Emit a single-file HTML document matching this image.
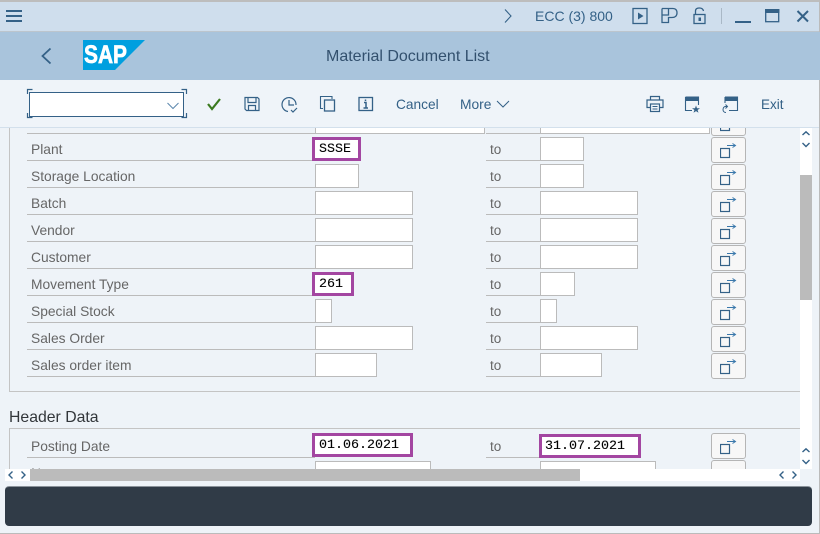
<!DOCTYPE html>
<html><head><meta charset="utf-8"><style>
html,body{margin:0;padding:0}
body{width:820px;height:534px;overflow:hidden;position:relative;background:#eef3f8;font-family:"Liberation Sans",sans-serif;font-size:13.5px}
div,svg{position:absolute;box-sizing:border-box}
.l{left:31px;color:#666;height:18px;line-height:20px;white-space:nowrap;font-size:13.800px}
.t{left:490px;color:#666;height:18px;line-height:20px}
.u{left:27px;width:288px;height:1px;background:#bbb}
.v{left:486px;width:54px;height:1px;background:#bbb}
.i{height:24px;background:#fff;border:1px solid #bbb}
.h{background:#fff;border:3px solid #a346a1;font:13.33px/19px "Liberation Mono",monospace;-webkit-text-stroke:.1px #000;color:#000;padding-left:4px;white-space:nowrap}
.b{left:711px;width:35px;height:26px;background:#f7f7f7;border:1px solid #b5b5b5;border-radius:3px}
.b svg{left:8px;top:5px}
.tb{color:#346187;white-space:nowrap;line-height:20px}
</style></head><body>

<svg width="0" height="0" style="position:absolute"><defs>
<symbol id="nav" viewBox="0 0 18 16"><rect x="0.500" y="5.500" width="9" height="9" fill="none" stroke="#346187" stroke-width="1.200"/><path d="M7 2.500H15M12.500 0.500L15.500 2.500L12.500 4.500" fill="none" stroke="#3a78ab" stroke-width="1"/></symbol>
</defs></svg>

<!-- scroll content -->
<div style="left:0;top:128px;width:800px;height:341px;overflow:hidden">
  <div style="left:9px;top:-20px;width:800px;height:284px;border:1px solid #c4c4c4;border-top:0"></div>
  <div style="left:9px;top:300px;width:800px;height:60px;border:1px solid #c4c4c4;border-bottom:0"></div>
</div>
<div style="left:0;top:0;width:820px;height:534px;overflow:hidden">
  <!-- top clipped row -->
  <div style="left:27px;top:133px;width:288px;height:1px;background:#bbb"></div>
  <div style="left:315px;top:128px;width:170px;height:6px;background:#fff;border:1px solid #bbb;border-top:0"></div>
  <div style="left:486px;top:133px;width:54px;height:1px;background:#bbb"></div>
  <div style="left:540px;top:128px;width:170px;height:6px;background:#fff;border:1px solid #bbb;border-top:0"></div>
  <div style="left:711px;top:128px;width:35px;height:8px;overflow:hidden"><div class="b" style="left:0;top:-18px"><svg width="18" height="16"><use href="#nav"/></svg></div></div>

  <!-- Plant -->
  <div class="l" style="top:140px">Plant</div><div class="u" style="top:160px"></div>
  <div class="h" style="left:312px;top:137px;width:49px;height:24px">SSSE</div>
  <div class="t" style="top:140px">to</div><div class="v" style="top:160px"></div>
  <div class="i" style="left:540px;top:137px;width:44px"></div>
  <div class="b" style="top:137px"><svg width="18" height="16"><use href="#nav"/></svg></div>

  <!-- Storage -->
  <div class="l" style="top:167px">Storage Location</div><div class="u" style="top:187px"></div>
  <div class="i" style="left:315px;top:164px;width:44px"></div>
  <div class="t" style="top:167px">to</div><div class="v" style="top:187px"></div>
  <div class="i" style="left:540px;top:164px;width:44px"></div>
  <div class="b" style="top:164px"><svg width="18" height="16"><use href="#nav"/></svg></div>

  <!-- Batch -->
  <div class="l" style="top:194px">Batch</div><div class="u" style="top:214px"></div>
  <div class="i" style="left:315px;top:191px;width:98px"></div>
  <div class="t" style="top:194px">to</div><div class="v" style="top:214px"></div>
  <div class="i" style="left:540px;top:191px;width:98px"></div>
  <div class="b" style="top:191px"><svg width="18" height="16"><use href="#nav"/></svg></div>

  <!-- Vendor -->
  <div class="l" style="top:221px">Vendor</div><div class="u" style="top:241px"></div>
  <div class="i" style="left:315px;top:218px;width:98px"></div>
  <div class="t" style="top:221px">to</div><div class="v" style="top:241px"></div>
  <div class="i" style="left:540px;top:218px;width:98px"></div>
  <div class="b" style="top:218px"><svg width="18" height="16"><use href="#nav"/></svg></div>

  <!-- Customer -->
  <div class="l" style="top:248px">Customer</div><div class="u" style="top:268px"></div>
  <div class="i" style="left:315px;top:245px;width:98px"></div>
  <div class="t" style="top:248px">to</div><div class="v" style="top:268px"></div>
  <div class="i" style="left:540px;top:245px;width:98px"></div>
  <div class="b" style="top:245px"><svg width="18" height="16"><use href="#nav"/></svg></div>

  <!-- Movement -->
  <div class="l" style="top:275px">Movement Type</div><div class="u" style="top:295px"></div>
  <div class="h" style="left:312px;top:272px;width:42px;height:24px">261</div>
  <div class="t" style="top:275px">to</div><div class="v" style="top:295px"></div>
  <div class="i" style="left:540px;top:272px;width:35px"></div>
  <div class="b" style="top:272px"><svg width="18" height="16"><use href="#nav"/></svg></div>

  <!-- Special -->
  <div class="l" style="top:302px">Special Stock</div><div class="u" style="top:322px"></div>
  <div class="i" style="left:315px;top:299px;width:17px"></div>
  <div class="t" style="top:302px">to</div><div class="v" style="top:322px"></div>
  <div class="i" style="left:540px;top:299px;width:17px"></div>
  <div class="b" style="top:299px"><svg width="18" height="16"><use href="#nav"/></svg></div>

  <!-- Sales Order -->
  <div class="l" style="top:329px">Sales Order</div><div class="u" style="top:349px"></div>
  <div class="i" style="left:315px;top:326px;width:98px"></div>
  <div class="t" style="top:329px">to</div><div class="v" style="top:349px"></div>
  <div class="i" style="left:540px;top:326px;width:98px"></div>
  <div class="b" style="top:326px"><svg width="18" height="16"><use href="#nav"/></svg></div>

  <!-- Sales order item -->
  <div class="l" style="top:356px">Sales order item</div><div class="u" style="top:376px"></div>
  <div class="i" style="left:315px;top:353px;width:62px"></div>
  <div class="t" style="top:356px">to</div><div class="v" style="top:376px"></div>
  <div class="i" style="left:540px;top:353px;width:62px"></div>
  <div class="b" style="top:353px"><svg width="18" height="16"><use href="#nav"/></svg></div>

  <!-- Header Data -->
  <div style="left:9px;top:409px;font-size:15.800px;line-height:18px;color:#32363a">Header Data</div>

  <div class="l" style="top:437px">Posting Date</div><div class="u" style="top:457px"></div>
  <div class="h" style="left:312px;top:433px;width:101px;height:24px">01.06.2021</div>
  <div class="t" style="top:437px">to</div><div class="v" style="top:457px"></div>
  <div class="h" style="left:539px;top:434px;width:102px;height:24px;padding-left:3px">31.07.2021</div>
  <div class="b" style="top:433px"><svg width="18" height="16"><use href="#nav"/></svg></div>

  <div class="l" style="top:464px;height:5px;overflow:hidden">Name</div>
  <div style="left:315px;top:461px;width:116px;height:9px;background:#fff;border:1px solid #bbb;border-bottom:0"></div>
  <div style="left:540px;top:461px;width:116px;height:9px;background:#fff;border:1px solid #bbb;border-bottom:0"></div>
  <div style="left:711px;top:460px;width:35px;height:10px;background:#f7f7f7;border:1px solid #b5b5b5;border-bottom:0;border-radius:3px 3px 0 0"></div>
</div>

<!-- vertical scrollbar -->
<div style="left:800px;top:128px;width:12px;height:341px;background:#fff"></div>
<div style="left:800px;top:175px;width:12px;height:125px;background:#bbb"></div>
<svg style="left:800px;top:128px" width="12" height="22"><path d="M2.500 7L6 3.800L9.500 7M2.500 15L6 18.500L9.500 15" fill="none" stroke="#346187" stroke-width="1.400"/></svg>
<svg style="left:800px;top:445px" width="12" height="22"><path d="M2.500 7L6 3.800L9.500 7M2.500 15L6 18.500L9.500 15" fill="none" stroke="#346187" stroke-width="1.400"/></svg>

<!-- horizontal scrollbar -->
<div style="left:5px;top:469px;width:795px;height:12px;background:#fff"></div>
<div style="left:30px;top:469px;width:550px;height:12px;background:#bbb"></div>
<svg style="left:5px;top:469px" width="24" height="12"><path d="M7.500 2.500L4 6L7.500 9.500M16.500 2.500L20 6L16.500 9.500" fill="none" stroke="#346187" stroke-width="1.400"/></svg>
<svg style="left:776px;top:469px" width="24" height="12"><path d="M7.500 2.500L4 6L7.500 9.500M16.500 2.500L20 6L16.500 9.500" fill="none" stroke="#346187" stroke-width="1.400"/></svg>

<!-- message bar -->
<div style="left:5px;top:486px;width:807px;height:40px;background:#303b47;border-top:1px solid #8a929a;border-radius:4px"></div>
<div style="left:0;top:533px;width:820px;height:1px;background:#bbb"></div>
<div style="left:819px;top:0;width:1px;height:534px;background:#bbb"></div>

<!-- title bar -->
<div style="left:0;top:0;width:820px;height:2px;background:#bdbdbd"></div>
<div style="left:0;top:2px;width:820px;height:29px;background:#cfdeed"></div>
<div style="left:0;top:31px;width:820px;height:1px;background:#bcc5cd"></div>
<div style="left:819px;top:0;width:1px;height:32px;background:#bbb"></div>
<svg style="left:0;top:0" width="30" height="30"><path d="M6 11H22M6 16H22M6 21H22" stroke="#346187" stroke-width="2"/></svg>
<svg style="left:500px;top:6px" width="16" height="20"><path d="M5 3.500L11 10L5 16.500" fill="none" stroke="#346187" stroke-width="1.100"/></svg>
<div class="tb" style="left:535px;top:6px;font-size:14px">ECC (3) 800</div>
<svg style="left:630px;top:6px" width="20" height="20"><rect x="3" y="2.500" width="14" height="15" fill="none" stroke="#346187" stroke-width="1.300"/><path d="M8 6.500L13.500 10L8 13.500Z" fill="#346187"/></svg>
<svg style="left:659px;top:6px" width="20" height="20"><path d="M3 2.500H14C17.500 2.500 18 5 18 7C18 10 16 11.500 13 11.500H9.500V16.500H3V9H9.500V2.500M3 2.500V9" fill="none" stroke="#346187" stroke-width="1.300"/></svg>
<svg style="left:690px;top:6px" width="20" height="20"><rect x="4" y="8.500" width="11" height="9" fill="none" stroke="#346187" stroke-width="1.300"/><path d="M5.500 8.500V5C5.500 2.500 7.500 2 9.500 2C11.500 2 13 3 13.500 5" fill="none" stroke="#346187" stroke-width="1.300"/><rect x="8.500" y="11.500" width="2.500" height="3.500" fill="#346187"/></svg>
<div style="left:721px;top:8px;width:1px;height:16px;background:#a9b8c6"></div>
<div style="left:735px;top:21px;width:16px;height:2px;background:#346187"></div>
<svg style="left:765px;top:7px" width="16" height="17"><rect x=".7" y="2.700" width="13" height="12" fill="none" stroke="#346187" stroke-width="1.300"/><rect x="0" y="2" width="14.400" height="4" fill="#346187"/></svg>
<svg style="left:795px;top:8px" width="16" height="16"><path d="M2.500 3L13 13.500M13 3L2.500 13.500" stroke="#346187" stroke-width="2"/></svg>

<!-- blue band -->
<div style="left:0;top:32px;width:820px;height:48px;background:#a9c4dc"></div>
<svg style="left:38px;top:46px" width="16" height="20"><path d="M12.500 2.500L4.500 10L12.500 17.500" fill="none" stroke="#346187" stroke-width="1.800"/></svg>
<svg style="left:83px;top:40px" width="62" height="30"><polygon points="0,0 62,0 32,30 0,30" fill="#009fdf"/><text x="1" y="23" font-family="Liberation Sans" font-weight="700" font-size="25" fill="#fff" stroke="#fff" stroke-width=".7" textLength="43" lengthAdjust="spacingAndGlyphs">SAP</text></svg>
<div style="left:326px;top:47px;font-size:16px;line-height:20px;color:#32506e;white-space:nowrap">Material Document List</div>

<!-- toolbar -->
<div style="left:0;top:80px;width:819px;height:48px;background:#eff4f9;border-bottom:1px solid #d3e0ec"></div>
<div style="left:29px;top:91.500px;width:155px;height:25.500px;background:#fff;border:1px solid #346187"></div>
<svg style="left:26px;top:88px" width="162" height="32"><path d="M6.500 1.500H1.500V6M155.500 1.500H160.500V6M6.500 29.500H1.500V25M155.500 29.500H160.500V25" fill="none" stroke="#346187" stroke-width="1.200"/><path d="M141.500 15L147 20.500L152.500 15" fill="none" stroke="#5b87ad" stroke-width="1"/></svg>
<svg style="left:205px;top:95px" width="18" height="18"><path d="M3 9L7 14L15 4" fill="none" stroke="#3b7a1f" stroke-width="2.200"/></svg>
<svg style="left:243px;top:95px" width="18" height="18"><path d="M2 2.500H14.500L16 4V15.500H3.500L2 14Z" fill="none" stroke="#346187" stroke-width="1.200"/><path d="M5 2.500V7.500H13V2.500M5.500 15.500V10.500H12.500V15.500" fill="none" stroke="#346187" stroke-width="1.200"/></svg>
<svg style="left:280px;top:95px" width="20" height="20"><path d="M16 10A7 7 0 1 0 8 16.500" fill="none" stroke="#346187" stroke-width="1.200"/><path d="M9 5V10H14" fill="none" stroke="#346187" stroke-width="1.200"/><path d="M11 15L13 17L17 13" fill="none" stroke="#346187" stroke-width="1.200"/></svg>
<svg style="left:319px;top:95px" width="18" height="18"><path d="M4 13.500H1.500V1.500H13V4" fill="none" stroke="#346187" stroke-width="1.100"/><rect x="5.500" y="5" width="10" height="11" fill="none" stroke="#346187" stroke-width="1.300"/></svg>
<svg style="left:357px;top:95px" width="18" height="18"><rect x="2" y="2.500" width="13.500" height="13" fill="none" stroke="#346187" stroke-width="1.300"/><path d="M7 7.500H9V13M6.500 13H11M8.500 4.500V6" fill="none" stroke="#346187" stroke-width="1.500"/></svg>
<div class="tb" style="left:396px;top:95px;font-size:13.700px">Cancel</div>
<div class="tb" style="left:460px;top:95px;font-size:13.800px">More</div>
<svg style="left:496px;top:97px" width="14" height="14"><path d="M1 4L7 10L13 4" fill="none" stroke="#346187" stroke-width="1"/></svg>
<svg style="left:646px;top:95px" width="18" height="18"><path d="M4.500 5V1.500H13.500V5M4.500 12.500H1V5H17V12.500H13.500" fill="none" stroke="#346187" stroke-width="1.200"/><rect x="4.500" y="9" width="9" height="7.500" fill="none" stroke="#346187" stroke-width="1.200"/><path d="M6.500 11.500H11.500M6.500 14H11.500" stroke="#346187"/></svg>
<svg style="left:684px;top:96px" width="18" height="17"><path d="M1.500 1H14.500V9M8 14.500H1.500V1" fill="none" stroke="#346187" stroke-width="1.100"/><rect x="1" y="1" width="14" height="4" fill="#346187"/><path d="M12 9.500L13 12.300H16L13.600 14L14.500 16.800L12 15.100L9.500 16.800L10.400 14L8 12.300H11Z" fill="#346187"/></svg>
<svg style="left:722px;top:96px" width="18" height="17"><path d="M3 1H15.500V14.500H7M3 1V7" fill="none" stroke="#346187" stroke-width="1.100"/><rect x="3" y="1" width="13" height="4" fill="#346187"/><path d="M5 10.500H3.500C2 10.500 1 12 1 13.500C1 15 2 16.500 4 16.500M3.500 8.500L5.500 10.500L3.500 12.500" fill="none" stroke="#346187" stroke-width="1"/></svg>
<div class="tb" style="left:761px;top:95px">Exit</div>
</body></html>
